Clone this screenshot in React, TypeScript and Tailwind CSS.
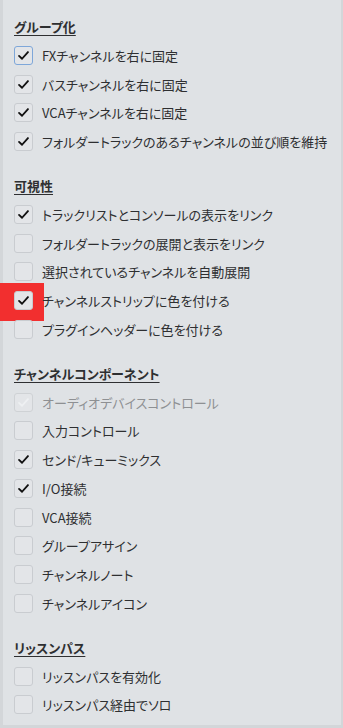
import type { ReactNode } from "react";

type Item = { label: string; checked?: boolean; disabled?: boolean; focused?: boolean; marked?: boolean };

const sections: { title: string; items: Item[] }[] = [
  {
    title: "グループ化",
    items: [
      { label: "FXチャンネルを右に固定", checked: true, focused: true },
      { label: "バスチャンネルを右に固定", checked: true },
      { label: "VCAチャンネルを右に固定", checked: true },
      { label: "フォルダートラックのあるチャンネルの並び順を維持", checked: true },
    ],
  },
  {
    title: "可視性",
    items: [
      { label: "トラックリストとコンソールの表示をリンク", checked: true },
      { label: "フォルダートラックの展開と表示をリンク" },
      { label: "選択されているチャンネルを自動展開" },
      { label: "チャンネルストリップに色を付ける", checked: true, marked: true },
      { label: "プラグインヘッダーに色を付ける" },
    ],
  },
  {
    title: "チャンネルコンポーネント",
    items: [
      { label: "オーディオデバイスコントロール", checked: true, disabled: true },
      { label: "入力コントロール" },
      { label: "センド/キューミックス", checked: true },
      { label: "I/O接続", checked: true },
      { label: "VCA接続" },
      { label: "グループアサイン" },
      { label: "チャンネルノート" },
      { label: "チャンネルアイコン" },
    ],
  },
  {
    title: "リッスンパス",
    items: [{ label: "リッスンパスを有効化" }, { label: "リッスンパス経由でソロ" }],
  },
];

function Check({ color }: { color: string }) {
  return (
    <svg viewBox="0 0 16 16" className="h-[13px] w-[13px]">
      <path d="M2.5 8.5 L6.2 12 L13.5 3.8" fill="none" stroke={color} strokeWidth="2.3" strokeLinecap="round" strokeLinejoin="round" />
    </svg>
  );
}

function Row({ item }: { item: Item }) {
  const box = item.focused
    ? "border-[#7ea7d9]"
    : item.disabled
      ? "border-[#cfd2d5] bg-[#d3d6d9]"
      : "border-[#c9ccd0]";
  return (
    <div className="relative flex h-[28.7px] items-center">
      {item.marked && <div className="absolute left-[-14px] top-[-3px] h-[38px] w-[44px] bg-[#f22f2f]" />}
      <div className={`relative flex h-[19px] w-[19px] items-center justify-center rounded-[3px] border bg-[#e3e5e8] ${box}`}>
        {item.checked && <Check color={item.disabled ? "#eef0f2" : "#111111"} />}
      </div>
      <span className={`relative ml-[9px] text-[13px] whitespace-nowrap ${item.disabled ? "text-[#8e9093]" : "text-[#2e2f31]"}`}>
        {item.label}
      </span>
    </div>
  );
}

function Section({ title, children }: { title: string; children: ReactNode }) {
  return (
    <div className="flex flex-col">
      <div className="flex h-[28.7px] items-center">
        <span className="text-[13px] font-bold text-[#2e2f31] underline underline-offset-[3px]">{title}</span>
      </div>
      {children}
    </div>
  );
}

export default function App() {
  return (
    <div
      className="h-[728px] w-[343px] overflow-hidden bg-[#d3d6d9] pb-[3px] pl-[3px] pr-[2px] [font-feature-settings:'palt'] leading-none"
      style={{ fontFamily: '"Noto Sans CJK JP", "Noto Sans", sans-serif' }}
    >
      <div className="flex h-full flex-col gap-[15.6px] bg-[#dfe2e5] pl-[11px] pt-[12.5px]">
        {sections.map((s) => (
          <Section key={s.title} title={s.title}>
            {s.items.map((it) => (
              <Row key={it.label} item={it} />
            ))}
          </Section>
        ))}
      </div>
    </div>
  );
}
